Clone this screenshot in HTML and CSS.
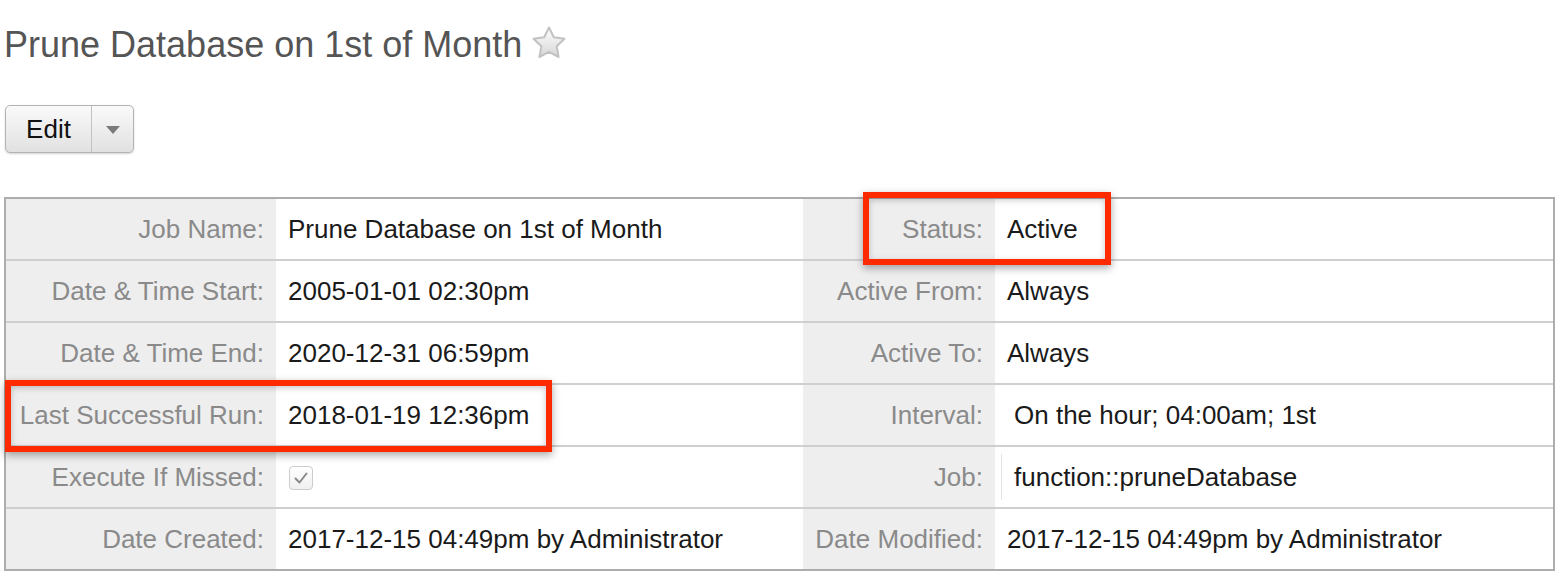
FILE: index.html
```html
<!DOCTYPE html>
<html>
<head>
<meta charset="utf-8">
<link rel="stylesheet" href="styles.css">
</head>
<body>
<div class="page">
  <h1 class="title">Prune Database on 1st of Month
    <svg class="star" width="36" height="36" viewBox="0 0 36 36">
      <defs>
        <linearGradient id="sg" x1="0" y1="0" x2="0" y2="1">
          <stop offset="0" stop-color="#ffffff"/>
          <stop offset="1" stop-color="#d6d6d6"/>
        </linearGradient>
      </defs>
      <path d="M18 2.5 L22.8 12.3 L33.5 13.8 L25.7 21.3 L27.6 32 L18 26.9 L8.4 32 L10.3 21.3 L2.5 13.8 L13.2 12.3 Z" fill="url(#sg)" stroke="#c2c2c2" stroke-width="2" stroke-linejoin="round"/>
    </svg>
  </h1>

  <div class="btn-group">
    <span class="btn-main">Edit</span>
    <span class="btn-caret"><span class="caret"></span></span>
  </div>

  <div class="detail-wrap">
    <div class="detail">
      <div class="row">
        <div class="lbl">Job Name:</div><div class="val">Prune Database on 1st of Month</div>
        <div class="lbl">Status:</div><div class="val">Active</div>
      </div>
      <div class="row">
        <div class="lbl">Date &amp; Time Start:</div><div class="val">2005-01-01 02:30pm</div>
        <div class="lbl">Active From:</div><div class="val">Always</div>
      </div>
      <div class="row">
        <div class="lbl">Date &amp; Time End:</div><div class="val">2020-12-31 06:59pm</div>
        <div class="lbl">Active To:</div><div class="val">Always</div>
      </div>
      <div class="row">
        <div class="lbl">Last Successful Run:</div><div class="val">2018-01-19 12:36pm</div>
        <div class="lbl">Interval:</div><div class="val val-inset"><span class="inset">On the hour; 04:00am; 1st</span></div>
      </div>
      <div class="row">
        <div class="lbl">Execute If Missed:</div><div class="val"><span class="check"><svg width="16" height="14" viewBox="0 0 16 14"><path d="M2.5 7.5 L6.5 11.5 L13.5 2.5" fill="none" stroke="#8a8a8a" stroke-width="2" stroke-linecap="round" stroke-linejoin="round"/></svg></span></div>
        <div class="lbl">Job:</div><div class="val val-inset"><span class="inset lined">function::pruneDatabase</span></div>
      </div>
      <div class="row last">
        <div class="lbl">Date Created:</div><div class="val">2017-12-15 04:49pm by Administrator</div>
        <div class="lbl">Date Modified:</div><div class="val">2017-12-15 04:49pm by Administrator</div>
      </div>
    </div>
    <div class="mark mark-status"></div>
    <div class="mark mark-run"></div>
  </div>
</div>
</body>
</html>
```

FILE: styles.css
```css
html, body {
  margin: 0;
  padding: 0;
  background: #ffffff;
}

.page {
  padding: 0 0 0 4px;
  font-family: "Liberation Sans", Arial, Helvetica, sans-serif;
}

.title {
  margin: 24px 0 0 0;
  font-size: 36px;
  line-height: 42px;
  font-weight: normal;
  color: #555555;
  display: flex;
  align-items: center;
}

.star {
  margin-left: 9px;
  margin-top: -4px;
}

.btn-group {
  margin: 39px 0 0 1px;
  display: inline-flex;
  height: 46px;
  border: 1px solid #b3b3b3;
  border-radius: 5px;
  background: linear-gradient(#fafafa, #e1e1e1);
  box-shadow: 0 1px 2px rgba(0,0,0,0.18);
}

.btn-main {
  width: 85px;
  display: flex;
  align-items: center;
  justify-content: center;
  font-size: 26px;
  color: #111;
  border-right: 1px solid #c2c2c2;
}

.btn-caret {
  width: 41px;
  display: flex;
  align-items: center;
  justify-content: center;
}

.caret {
  width: 0;
  height: 0;
  border-left: 7px solid transparent;
  border-right: 7px solid transparent;
  border-top: 8px solid #7a7a7a;
  margin-top: 1px;
}

.detail-wrap {
  position: relative;
  margin-top: 44px;
  width: 1551px;
}

.detail {
  border: 2px solid #adadad;
  font-size: 26px;
}

.row {
  display: grid;
  grid-template-columns: 270px 527px 192px 558px;
  height: 60px;
  border-bottom: 2px solid #cfcfcf;
}

.row.last {
  border-bottom: none;
}

.lbl {
  background: #eeeeee;
  color: #8a8a8a;
  text-align: right;
  padding-right: 12px;
  display: flex;
  align-items: center;
  justify-content: flex-end;
  white-space: nowrap;
}

.val {
  color: #1a1a1a;
  padding-left: 12px;
  display: flex;
  align-items: center;
  white-space: nowrap;
}

.val-inset {
  padding-left: 6px;
}

.inset {
  display: flex;
  align-items: center;
  height: 46px;
  padding-left: 12px;
  border-left: 1px solid transparent;
}

.inset.lined {
  border-left-color: #e4e4e4;
}

.check {
  width: 22px;
  height: 22px;
  border: 1px solid #cccccc;
  border-radius: 4px;
  background: linear-gradient(#ffffff, #f0f0f0);
  display: flex;
  align-items: center;
  justify-content: center;
  margin-left: 1px;
  margin-top: 2px;
}

.mark {
  position: absolute;
  border: 6px solid #ff2a00;
  box-shadow: 0 3px 8px rgba(0,0,0,0.35), inset 0 2px 6px rgba(0,0,0,0.22);
  box-sizing: border-box;
}

.mark-status {
  left: 859px;
  top: -5px;
  width: 248px;
  height: 73px;
}

.mark-run {
  left: 1px;
  top: 183px;
  width: 547px;
  height: 72px;
}
```
